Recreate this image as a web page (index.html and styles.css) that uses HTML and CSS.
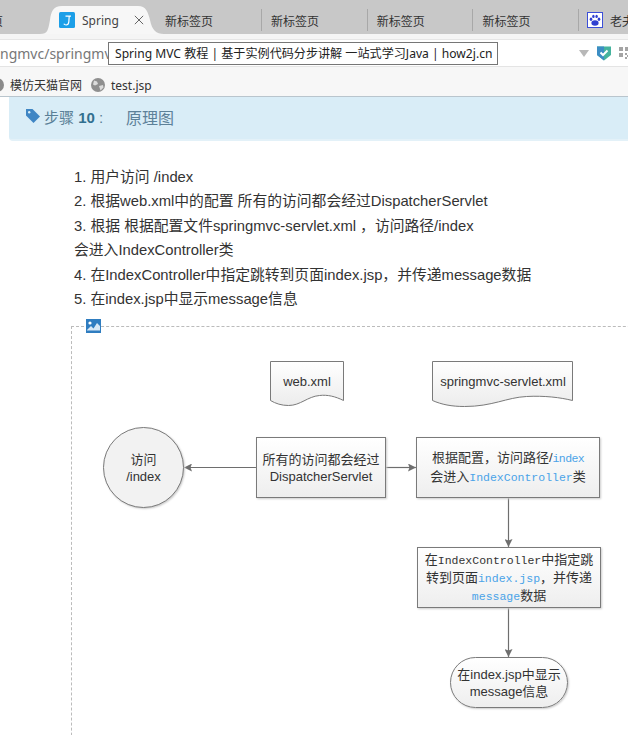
FILE: index.html
```html
<!DOCTYPE html>
<html lang="zh-CN">
<head>
<meta charset="utf-8">
<title>Spring MVC 教程</title>
<link rel="stylesheet" href="styles.css">
</head>
<body>
<div class="browser">
  <div class="tabs">
    <div class="tab-stub"><span>页</span></div>
    <div class="tab-active">
      <svg class="tab-shape" width="124" height="28" viewBox="0 0 124 28"><path d="M0 28C8 28 8 24 10 14C11 6 13 0 22 0H98C106 0 108 6 110 14C112 24 116 28 124 28Z" fill="#f7f7f7"/></svg>
      <svg class="fav-j" width="16" height="16" viewBox="0 0 16 16"><rect width="16" height="16" rx="1.500" fill="#1c9fe8"/><path d="M6.500 4.200h5.500M10.200 4.200l-.4 5.800c-.2 2-1.200 3-2.700 3-1 0-1.800-.4-2.300-1.200" fill="none" stroke="#fff" stroke-width="1.200"/></svg>
      <span class="tab-active-title">Spring</span>
      <svg class="tab-close" width="12" height="12" viewBox="0 0 12 12"><path d="M1 1l10 10M11 1L1 11" stroke="#666" stroke-width="1.200"/></svg>
    </div>
    <div class="tab tab-first">新标签页</div>
    <div class="tab">新标签页</div>
    <div class="tab">新标签页</div>
    <div class="tab">新标签页</div>
    <div class="tab tab-last">
      <svg width="16" height="16" viewBox="0 0 16 16"><rect x=".5" y=".5" width="15" height="15" fill="#fff" stroke="#3b4fd8"/><g fill="#2f3fd0"><ellipse cx="8" cy="11" rx="3.600" ry="2.800"/><ellipse cx="4" cy="7.200" rx="1.300" ry="1.700"/><ellipse cx="12" cy="7.200" rx="1.300" ry="1.700"/><ellipse cx="6.400" cy="4.400" rx="1.200" ry="1.600"/><ellipse cx="9.600" cy="4.400" rx="1.200" ry="1.600"/></g></svg>
      <span>老夫</span>
    </div>
  </div>
  <div class="address-gap"></div>
  <div class="address">
    <span class="url">ngmvc/springmv</span>
    <span class="tooltip">Spring MVC 教程 | 基于实例代码分步讲解 一站式学习Java | how2j.cn</span>
    <div class="addr-tools">
      <span class="drop"></span>
      <svg width="14" height="16" viewBox="0 0 14 16"><path d="M0 1.500h14v8.500L7 15.500 0 10z" fill="#45b39d"/><path d="M0 1.500h7v14L0 10z" fill="#3c8dc4"/><path d="M3.500 7.500l2.500 2.500 4.500-4.500" fill="none" stroke="#fff" stroke-width="2"/></svg>
      <svg class="qr" width="10" height="14" viewBox="0 0 10 14"><path d="M0 1h4v4H0zM6 1h4v4H6zM0 7h4v4H0zM6 7h2v2H6zM8 9h2v2H8zM6 11h2v2H6z" fill="#a4a4a4"/></svg>
    </div>
  </div>
  <div class="bookmarks">
    <svg class="bm-stub" width="14" height="14" viewBox="0 0 14 14"><circle cx="7" cy="7" r="7" fill="#8a8a8a"/></svg>
    <span class="bm-text">模仿天猫官网</span>
    <svg class="bm-globe" width="14" height="14" viewBox="0 0 14 14"><circle cx="7" cy="7" r="7" fill="#8f8f8f"/><path d="M3 2.500l3 1 1 2.500-3 1.500-2-1zM8 8l4-1 .5 2.500-3 3z" fill="#dcdcdc"/></svg>
    <span class="bm-text">test.jsp</span>
  </div>
</div>
<div class="page">
  <div class="step-bar">
    <svg class="tag" width="16" height="16" viewBox="0 0 16 16"><path d="M1 1h6.500L15 8.500 8.500 15 1 7.500z" fill="#3f86c4"/><circle cx="4.200" cy="4.200" r="1.200" fill="#d9edf7"/></svg>
    <span class="step-label">步骤 <b>10</b> :</span>
    <span class="step-title">原理图</span>
  </div>
  <div class="steps">
    <p>1. 用户访问 /index</p>
    <p>2. 根据web.xml中的配置 所有的访问都会经过DispatcherServlet</p>
    <p>3. 根据 根据配置文件springmvc-servlet.xml ，访问路径/index</p>
    <p>会进入IndexController类</p>
    <p>4. 在IndexController中指定跳转到页面index.jsp，并传递message数据</p>
    <p>5. 在index.jsp中显示message信息</p>
  </div>
  <div class="figure">
    <svg class="fig-icon" width="15" height="14" viewBox="0 0 15 14"><rect width="15" height="14" fill="#2f7dc0"/><path d="M1 11l4-4 2.500 2.500L11 4l3 3v4.500H1z" fill="#d7e8f5"/><circle cx="4" cy="4" r="1.600" fill="#fff"/></svg>
    <svg class="lines" width="557" height="409" viewBox="0 0 557 409">
      <defs>
        <linearGradient id="g" x1="0" y1="0" x2="0" y2="1"><stop offset="0" stop-color="#fff"/><stop offset="1" stop-color="#ececec"/></linearGradient>
        <marker id="a" markerWidth="8" markerHeight="8" refX="8" refY="4" orient="auto" markerUnits="userSpaceOnUse"><path d="M0 0l8 4-8 4 1.500-4z" fill="#6e6e6e"/></marker>
      </defs>
      <path d="M199.500 35.500h73v39c-8 -4 -16 -6 -24 -5c-12 1 -19 10 -31 10c-7 0 -13 -2 -18 -5z" fill="url(#g)" stroke="#7a7a7a"/>
      <path d="M361.500 35.500h140v39c-12 -3 -28 -5 -46 -4c-20 1 -34 10 -62 10c-13 0 -23 -2 -32 -6z" fill="url(#g)" stroke="#7a7a7a"/>
      <path d="M185 141.500H113" fill="none" stroke="#6e6e6e" stroke-width="1.200" marker-end="url(#a)"/>
      <path d="M315 141.500h30" fill="none" stroke="#6e6e6e" stroke-width="1.200" marker-end="url(#a)"/>
      <path d="M437.500 171v50" fill="none" stroke="#6e6e6e" stroke-width="1.200" marker-end="url(#a)"/>
      <path d="M437.500 281v50" fill="none" stroke="#6e6e6e" stroke-width="1.200" marker-end="url(#a)"/>
    </svg>
    <div class="node circle"><span>访问</span><span>/index</span></div>
    <div class="node doc doc-web">web.xml</div>
    <div class="node doc doc-mvc">springmvc-servlet.xml</div>
    <div class="node box box-1"><span>所有的访问都会经过</span><span>DispatcherServlet</span></div>
    <div class="node box box-2"><span>根据配置，访问路径/<code class="short">index</code></span><span>会进入<code>IndexController</code>类</span></div>
    <div class="node box box-3"><span>在<i>IndexController</i>中指定跳</span><span>转到页面<code>index.jsp</code>，并传递</span><span><code>message</code>数据</span></div>
    <div class="node pill"><span>在index.jsp中显示</span><span>message信息</span></div>
  </div>
</div>
</body>
</html>
```
FILE: styles.css
```css
* { box-sizing: border-box; }
html, body { margin: 0; padding: 0; height: 100%; overflow: hidden; background: #fff; }
body { width: 628px; height: 735px; font-family: "Liberation Sans", "Noto Sans CJK SC", sans-serif; color: #333; }

.browser { height: 97px; background: #f7f7f7; overflow: hidden; border-bottom: 1px solid #b9c5cd; }

.tabs { display: flex; height: 34px; background: #c8c8c8; align-items: stretch; font-size: 12px; color: #333; white-space: nowrap; overflow: hidden; }
.tab-stub { width: 50px; flex: none; padding-top: 12px; }
.tab-stub span { margin-left: -9px; }
.tab-active { width: 110px; flex: none; margin-top: 6px; display: flex; align-items: center; padding: 0 0 0 9px; position: relative; font-family: "Noto Sans", "Noto Sans CJK SC", sans-serif; }
.tab-shape { position: absolute; left: -10px; top: 0; }
.fav-j { position: relative; flex: none; }
.tab-active-title { position: relative; margin-left: 7px; width: 44px; overflow: hidden; font-size: 12px; color: #444; }
.tab-close { position: relative; margin-left: 8px; width: 10px; height: 10px; }
.tab { width: 105.700px; flex: none; display: flex; align-items: center; padding: 6px 0 0 10px; position: relative; }
.tab::before { content: ""; position: absolute; left: 0; top: 9px; height: 22px; width: 1px; background: #a8a8a8; }
.tab-first { width: 101px; padding-left: 5px; }
.tab-first::before { display: none; }
.tab-last { gap: 7px; padding-left: 9px; }

.address-gap { height: 6px; background: #f5f5f5; border-bottom: 1px solid #e6e6e6; }
.address { height: 27px; background: #fff; border-bottom: 1px solid #e4e4e4; display: flex; align-items: center; position: relative; overflow: hidden; }
.url { font-size: 14px; color: #777; white-space: nowrap; width: 108px; overflow: hidden; flex: none; font-family: "Noto Sans", sans-serif; }
.tooltip { width: 390px; flex: none; height: 23px; margin-top: 1px; border: 1px solid #767676; background: #fff; font-size: 12.100px; line-height: 21px; padding-left: 6px; color: #222; white-space: nowrap; font-family: "Noto Sans", "Noto Sans CJK SC", sans-serif; overflow: hidden; }
.addr-tools { display: flex; align-items: center; margin-left: 81px; flex: none; }
.drop { width: 0; height: 0; border-left: 5px solid transparent; border-right: 5px solid transparent; border-top: 7px solid #b8b8b8; margin-right: 8px; }
.qr { margin-left: 8px; flex: none; }

.bookmarks { height: 29px; display: flex; align-items: center; padding-top: 7px; font-size: 12px; color: #333; font-family: "Noto Sans", "Noto Sans CJK SC", sans-serif; }
.bm-stub { margin-left: -10px; margin-right: 6px; flex: none; }
.bm-globe { margin-left: 9px; margin-right: 6px; flex: none; }
.bm-text { white-space: nowrap; }

.page { position: relative; height: 638px; overflow: hidden; }
.step-bar { margin-left: 9px; height: 44px; background: #d9edf7; border-bottom: 2px solid #e3f1f8; border-radius: 0 0 0 4px; display: flex; align-items: center; padding: 0 0 3px 16px; color: #5a7f96; font-size: 15px; }
.tag { flex: none; margin-right: 3px; margin-top: -2px; }
.step-label { width: 82px; flex: none; }
.step-label b { color: #31708f; }
.step-title { font-size: 16px; color: #5d8199; }

.steps { margin: 24px 0 0 74px; font-size: 14.800px; line-height: 24.400px; color: #333; white-space: nowrap; }
.steps p { margin: 0; }

.figure { position: absolute; left: 71px; top: 229px; width: 600px; height: 500px; border-top: 1px dashed #bbb; border-left: 1px dashed #bbb; }
.fig-icon { position: absolute; left: 14px; top: -8px; }
.lines { position: absolute; left: -1px; top: -1px; overflow: visible; }

.node { position: absolute; display: flex; flex-direction: column; align-items: center; justify-content: center; text-align: center; padding-top: 1px; font-size: 13px; line-height: 17px; color: #333; white-space: nowrap; }
.circle { left: 31px; top: 100px; width: 81px; height: 81px; border-radius: 50%; border: 1px solid #7a7a7a; background: #f2f2f2; box-shadow: 1px 1px 2px #ccc; }
.doc { height: 40px; }
.doc-web { left: 198px; top: 34px; width: 74px; }
.doc-mvc { left: 360px; top: 34px; width: 142px; }
.box { top: 110px; height: 61px; border: 1px solid #7a7a7a; background: linear-gradient(#fff, #eee); box-shadow: 1px 1px 2px #ccc; }
.box-1 { left: 184px; width: 130px; }
.box-2 { left: 344px; width: 184px; line-height: 18.500px; }
.box-3 { left: 345px; top: 220px; width: 184px; }
.box code { font-family: "Liberation Mono", monospace; font-size: 11.500px; color: #4aa3e8; }
.box code.short { letter-spacing: -0.6px; }
.box i { font-style: normal; font-family: "Liberation Mono", monospace; font-size: 11.500px; }
.pill { left: 378px; top: 330px; width: 118px; height: 51px; border-radius: 26px; border: 1px solid #7a7a7a; background: linear-gradient(#fff, #eee); box-shadow: 1px 1px 2px #ccc; }
```
